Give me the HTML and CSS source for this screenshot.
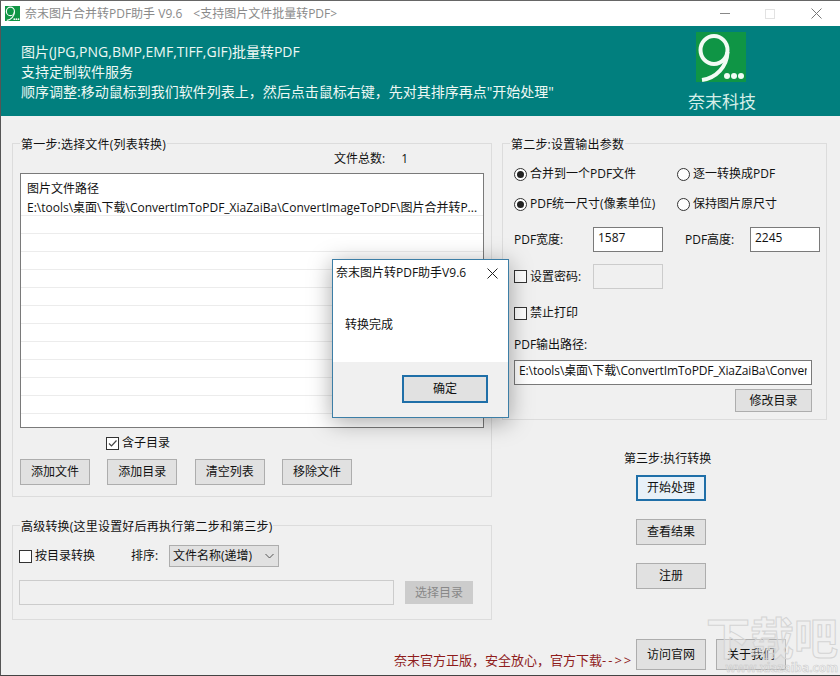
FILE: index.html
```html
<!DOCTYPE html>
<html lang="zh-CN">
<head>
  <meta charset="UTF-8" />
  <title>奈末图片合并转PDF助手</title>
  <link rel="stylesheet" href="styles.css">
</head>
<body>
<svg class="defs" width="0" height="0">
  <symbol id="logo" viewBox="0 0 50 50">
    <rect width="50" height="50" fill="#0f9545"/>
    <ellipse cx="18" cy="18" rx="13.5" ry="14" fill="none" stroke="#f2fbf5" stroke-width="4"/>
    <path d="M31.5 20C31 35 20 46 6 48" fill="none" stroke="#f2fbf5" stroke-width="4"/>
    <circle cx="31" cy="44" r="3" fill="#f2fbf5"/>
    <circle cx="38" cy="44" r="3" fill="#f2fbf5"/>
    <circle cx="45" cy="44" r="3" fill="#f2fbf5"/>
  </symbol>
</svg>

<div class="window">
  <div class="titlebar">
    <svg class="title-icon"><use href="#logo"/></svg>
    <span class="title-text">奈末图片合并转PDF助手 V9.6</span>
    <span class="title-sub">&lt;支持图片文件批量转PDF&gt;</span>
    <div class="win-btns">
      <span class="win-min"></span>
      <span class="win-max"></span>
      <svg class="win-close" width="11" height="11" viewBox="0 0 11 11"><path d="M.5.5l10 10M10.5.5l-10 10" stroke="#777" fill="none"/></svg>
    </div>
  </div>

  <div class="banner">
    <div class="banner-text">
      <p>图片(JPG,PNG,BMP,EMF,TIFF,GIF)批量转PDF</p>
      <p>支持定制软件服务</p>
      <p>顺序调整:移动鼠标到我们软件列表上，然后点击鼠标右键，先对其排序再点"开始处理"</p>
    </div>
    <div class="brand">
      <svg class="brand-logo"><use href="#logo"/></svg>
      <div class="brand-name">奈末科技</div>
    </div>
  </div>

  <div class="main">
    <div class="col-left">
      <fieldset class="group group-files">
        <legend>第一步:选择文件(列表转换)</legend>
        <div class="file-count"><span>文件总数:</span><span class="count-num">1</span></div>
        <ul class="file-list">
          <li class="list-head">图片文件路径</li>
          <li class="list-path">E:\tools\桌面\下载\ConvertImToPDF_XiaZaiBa\ConvertImageToPDF\图片合并转P...</li>
          <li></li><li></li><li></li><li></li><li></li><li></li>
          <li></li><li></li><li></li><li></li><li></li>
        </ul>
        <div class="subdir-row">
          <label class="opt"><span class="check">
            <svg width="11" height="11" viewBox="0 0 11 11"><path d="M2 5.5l2.5 2.5L9.5 2.5" fill="none" stroke="#444" stroke-width="1.2"/></svg>
          </span>含子目录</label>
        </div>
        <div class="file-btns">
          <button class="btn">添加文件</button>
          <button class="btn">添加目录</button>
          <button class="btn">清空列表</button>
          <button class="btn">移除文件</button>
        </div>
      </fieldset>

      <fieldset class="group group-adv">
        <legend>高级转换(这里设置好后再执行第二步和第三步)</legend>
        <div class="adv-row">
          <label class="opt adv-opt"><span class="check"></span>按目录转换</label>
          <span class="sort-label">排序:</span>
          <div class="select">
            <span>文件名称(递增)</span>
            <svg width="9" height="6" viewBox="0 0 9 6"><path d="M.5 1l4 4 4-4" fill="none" stroke="#555"/></svg>
          </div>
        </div>
        <div class="dir-row">
          <input class="field dir-field" type="text" disabled>
          <button class="btn btn-off" disabled>选择目录</button>
        </div>
      </fieldset>
    </div>

    <div class="col-right">
      <fieldset class="group group-output">
        <legend>第二步:设置输出参数</legend>
        <div class="radio-rows">
          <div class="radio-row">
            <label class="opt radio-a"><span class="radio on"></span>合并到一个PDF文件</label>
            <label class="opt radio-b"><span class="radio"></span>逐一转换成PDF</label>
          </div>
          <div class="radio-row">
            <label class="opt radio-a"><span class="radio on"></span>PDF统一尺寸(像素单位)</label>
            <label class="opt radio-b"><span class="radio"></span>保持图片原尺寸</label>
          </div>
        </div>
        <div class="size-row">
          <span class="size-label">PDF宽度:</span>
          <input class="field size-field" type="text" value="1587">
          <span class="size-label size-label2">PDF高度:</span>
          <input class="field size-field" type="text" value="2245">
        </div>
        <div class="pass-row">
          <label class="opt pass-opt"><span class="check"></span>设置密码:</label>
          <input class="field size-field field-off" type="text" disabled>
        </div>
        <label class="opt print-row"><span class="check"></span>禁止打印</label>
        <div class="path-label">PDF输出路径:</div>
        <input class="field path-field" type="text" value="E:\tools\桌面\下载\ConvertImToPDF_XiaZaiBa\ConvertImageToPDF\">
        <button class="btn btn-change">修改目录</button>
      </fieldset>

      <div class="step3">
        <div class="step3-title">第三步:执行转换</div>
        <button class="btn btn-focus">开始处理</button>
        <button class="btn">查看结果</button>
        <button class="btn">注册</button>
      </div>
    </div>

    <div class="footer">
      <span class="promo">奈末官方正版，安全放心，官方下载<span class="arrow">-->></span></span>
      <button class="btn btn-tall">访问官网</button>
      <button class="btn btn-tall btn-about">关于我们</button>
    </div>
  </div>

  <div class="dialog">
    <div class="dialog-title">
      <span>奈末图片转PDF助手V9.6</span>
      <svg width="11" height="11" viewBox="0 0 11 11"><path d="M.5.5l10 10M10.5.5l-10 10" stroke="#222" fill="none"/></svg>
    </div>
    <div class="dialog-msg">转换完成</div>
    <div class="dialog-foot"><button class="btn btn-ok">确定</button></div>
  </div>

  <div class="watermark">
    <div class="wm-big">下载吧</div>
    <div class="wm-url">www.xiazaiba.com</div>
  </div>
</div>
</body>
</html>
```

FILE: styles.css
```css
* { box-sizing: border-box; }
html, body {
  margin: 0;
  height: 100%;
  overflow: hidden;
}
body {
  font-family: 'Open Sans', 'Noto Sans CJK SC', sans-serif;
  font-size: 12px;
  line-height: 16px;
  color: #111;
  background: #f0f0f0;
}
.defs { position: absolute; }
.window {
  position: relative;
  width: 840px;
  height: 676px;
  overflow: hidden;
  background: #f0f0f0;
  border-left: 1px solid #555;
  border-top: 1px solid #666;
  border-bottom: 1px solid #444;
}

/* title bar */
.titlebar {
  display: flex;
  align-items: center;
  height: 25px;
  background: #fff;
  color: #8a8a8a;
  padding-left: 4px;
}
.title-icon { width: 15px; height: 15px; margin-right: 5px; }
.title-sub { margin-left: 11px; }
.win-btns {
  margin-left: auto;
  display: flex;
  align-items: center;
  padding-right: 18px;
}
.win-min { width: 10px; height: 1px; background: #888; margin-right: 35px; }
.win-max { width: 10px; height: 10px; border: 1px solid #e2e2e2; margin-right: 36px; }

/* banner */
.banner {
  display: flex;
  justify-content: space-between;
  height: 90px;
  background: #017f7e;
  color: #eef8f4;
  font-family: 'Open Sans', 'Noto Sans CJK TC', sans-serif;
  font-size: 14px;
  line-height: 20px;
}
.banner-text { padding: 16px 0 0 20px; }
.banner-text p { margin: 0; white-space: nowrap; }
.brand {
  width: 68px;
  margin-right: 84px;
  display: flex;
  flex-direction: column;
  align-items: flex-start;
  padding-top: 6px;
}
.brand-logo { width: 50px; height: 50px; margin-left: 8px; }
.brand-name {
  font-size: 17px;
  line-height: 22px;
  margin-top: 9px;
  white-space: nowrap;
  color: #d6efe8;
}

/* layout */
.main {
  display: grid;
  grid-template-columns: 480px 325px;
  column-gap: 10px;
  padding: 19px 0 0 11px;
}
.group {
  margin: 0;
  padding: 0;
  min-width: 0;
  border: 1px solid #dcdcdc;
}
.group legend {
  margin-left: 7px;
  padding: 0 1px;
  height: 16px;
  line-height: 20px;
  letter-spacing: 0.2px;
}

/* shared controls */
.btn {
  display: block;
  width: 70px;
  height: 26px;
  padding: 0;
  font: inherit;
  color: #111;
  background: #e1e1e1;
  border: 1px solid #adadad;
  border-radius: 0;
}
.btn-focus {
  border: 2px solid #1f6fa8;
  background: #e8f1f8;
}
.btn-off { width: 68px; height: 23px; background: #ccc; border-color: #ccc; color: #888; }
.btn-tall { height: 31px; }
.field {
  display: block;
  height: 25px;
  margin: 0;
  padding: 0 4px 5px;
  font: inherit;
  color: #111;
  background: #fff;
  border: 1px solid #7a7a7a;
  border-radius: 0;
  outline: none;
}
.field-off, .dir-field { background: #f0f0f0; border-color: #ccc; }
.opt {
  display: flex;
  align-items: center;
  white-space: nowrap;
}
.check {
  width: 13px;
  height: 13px;
  margin-right: 3px;
  border: 1px solid #333;
  background: #fff;
  flex: none;
  display: flex;
}
.radio {
  position: relative;
  width: 13px;
  height: 13px;
  margin-right: 3px;
  border: 1px solid #333;
  border-radius: 50%;
  background: #fff;
  flex: none;
}
.radio.on::after {
  content: "";
  position: absolute;
  left: 2px;
  top: 2px;
  width: 7px;
  height: 7px;
  border-radius: 50%;
  background: #222;
}

/* step 1 */
.file-count {
  display: flex;
  height: 22px;
  padding-left: 321px;
  align-items: flex-start;
}
.count-num { margin-left: 16px; }
.file-list {
  list-style: none;
  margin: 0 0 0 7px;
  padding: 0;
  width: 464px;
  height: 255px;
  overflow: hidden;
  background: #fff;
  border: 1px solid #7a7a7a;
}
.file-list li {
  height: 18px;
  padding-left: 6px;
  white-space: nowrap;
  border-bottom: 1px solid #ececec;
}
.file-list .list-head { height: 23px; padding-top: 7px; border-bottom: 0; }
.file-list .list-path { height: 19px; padding-top: 3px; }
.subdir-row {
  height: 31px;
  padding: 7px 0 0 93px;
}
.file-btns {
  display: flex;
  gap: 17.33px;
  padding: 0 0 11px 7px;
}

/* advanced */
.group-adv { margin-top: 20px; }
.adv-row {
  display: flex;
  align-items: center;
  margin-top: 12px;
  padding-left: 6px;
}
.adv-opt { width: 112px; }
.sort-label { width: 38px; }
.select {
  display: flex;
  align-items: center;
  justify-content: space-between;
  width: 110px;
  height: 22px;
  padding: 0 4px 0 3px;
  background: #e1e1e1;
  border: 1px solid #adadad;
}
.dir-row {
  display: flex;
  align-items: center;
  gap: 11px;
  margin-top: 13px;
  padding: 0 0 14px 6px;
}
.dir-field { width: 375px; }

/* step 2 */
.radio-rows { margin-top: 8px; }
.radio-row {
  display: flex;
  align-items: center;
  height: 30px;
}
.radio-a { width: 163px; margin-left: 11px; }
.size-row, .pass-row {
  display: flex;
  align-items: center;
  padding-left: 11px;
}
.size-row { margin-top: 8px; }
.size-label { width: 79px; }
.size-label2 { width: 65px; margin-left: 22px; }
.size-field { width: 70px; }
.pass-row { margin-top: 12px; }
.pass-opt { width: 79px; }
.print-row { margin: 16px 0 0 11px; }
.path-label { margin: 16px 0 0 11px; }
.path-field { width: 298px; margin: 7px 0 0 11px; letter-spacing: -0.1px; }
.btn-change { width: 77px; height: 23px; margin: 4px 0 7px 232px; }

/* step 3 */
.step3 { padding-left: 134px; }
.step3-title {
  margin: 31px 0 8px -12px;
  white-space: nowrap;
}
.step3 .btn { margin-bottom: 18px; }

.footer {
  grid-column: 1 / 3;
  display: flex;
  align-items: center;
  margin: 19px 0 0 382px;
}
.promo {
  width: 242px;
  margin-top: 10px;
  color: #8f1c1c;
  font-family: 'Open Sans', 'Noto Sans CJK TC', sans-serif;
  font-size: 13px;
  white-space: nowrap;
}
.arrow { letter-spacing: 2px; }
.btn-about { margin-left: 10px; }

/* message box over the window */
.dialog {
  position: absolute;
  left: 331px;
  top: 258px;
  width: 177px;
  height: 159px;
  display: flex;
  flex-direction: column;
  background: #fff;
  border: 1px solid #3c7ea6;
  box-shadow: 0 4px 22px rgba(0, 0, 0, 0.35);
}
.dialog-title {
  display: flex;
  justify-content: space-between;
  align-items: center;
  padding: 0 10px 0 3px;
  height: 26px;
}
.dialog-msg {
  padding: 31px 0 0 12px;
  flex: 1;
}
.dialog-foot {
  height: 55px;
  padding: 13px 0 0 69px;
  background: #f0f0f0;
}
.btn-ok {
  width: 86px;
  height: 28px;
  background: #e1e1e1;
  border: 2px solid #1f6fa8;
}

/* site stamp on the screenshot */
.watermark {
  position: absolute;
  left: 702px;
  top: 613px;
  width: 135px;
  pointer-events: none;
  text-align: right;
  color: rgba(240, 240, 240, 0.35);
  -webkit-text-stroke: 1px #d4d4d4;
}
.wm-big {
  font-size: 44px;
  line-height: 48px;
  font-weight: 700;
  white-space: nowrap;
}
.wm-url {
  font-size: 12px;
  line-height: 12px;
  font-weight: 700;
  white-space: nowrap;
  -webkit-text-stroke: 0.5px #c8c8c8;
}
```
